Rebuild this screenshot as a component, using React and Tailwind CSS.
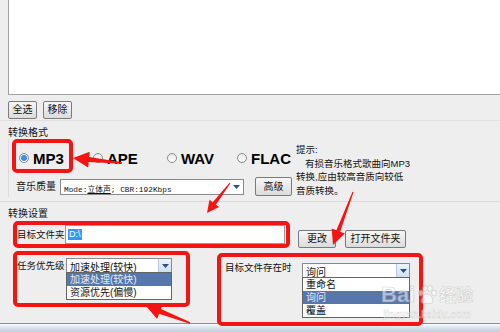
import React from "react";

const cjk = "font-['Liberation_Sans','Noto_Sans_CJK_SC',sans-serif]";

function Btn({ className = "", children }) {
  return (
    <div
      className={`flex shrink-0 items-center justify-center whitespace-nowrap rounded-[2px] border border-[#7a7a7a] bg-gradient-to-b from-[#f7f7f7] to-[#dcdcdc] text-[10px] leading-none text-[#111] ${className}`}
    >
      {children}
    </div>
  );
}

function Radio({ checked, label, className = "" }) {
  return (
    <div className={`flex items-center gap-[4px] ${className}`}>
      <div className="flex h-[10px] w-[10px] items-center justify-center rounded-full border border-[#8c8c8c] bg-gradient-to-b from-[#e9e9e9] to-white">
        {checked && <div className="h-[6px] w-[6px] rounded-full bg-[#3b8ee8]" />}
      </div>
      <span className="font-['Liberation_Sans',sans-serif] text-[15px] font-bold leading-none text-black">
        {label}
      </span>
    </div>
  );
}

function Caret() {
  return (
    <svg width="7" height="4" viewBox="0 0 7 4">
      <polygon points="0,0 7,0 3.5,4" fill="#2b4f8a" />
    </svg>
  );
}

function Select({ className = "", children, box, menu }) {
  return (
    <div className={`relative flex shrink-0 items-center border border-[#8a8a8a] bg-white ${className}`}>
      <div className="flex-1 overflow-hidden whitespace-nowrap pl-[3px]">{children}</div>
      <div
        className={`flex h-full w-[13px] items-center justify-center ${
          box ? "border-l border-[#b5c8df] bg-gradient-to-b from-[#eef4fb] to-[#cfdff0]" : ""
        }`}
      >
        <Caret />
      </div>
      {menu}
    </div>
  );
}

function DropList({ items, active }) {
  return (
    <div className="absolute -left-px top-full z-10 w-[calc(100%+2px)] border border-[#646464] bg-white">
      {items.map((t, i) => (
        <div
          key={t}
          className={`flex h-[13px] items-center whitespace-nowrap pl-[3px] text-[10px] leading-none ${
            i === active ? "bg-[#5676ac] text-[#e8ecf4]" : "text-[#111]"
          }`}
        >
          {t}
        </div>
      ))}
    </div>
  );
}

function arrow(x1, y1, x2, y2, head, hw, sw0, sw1) {
  const dx = x2 - x1;
  const dy = y2 - y1;
  const len = Math.hypot(dx, dy);
  const ux = dx / len;
  const uy = dy / len;
  const px = -uy;
  const py = ux;
  const bx = x2 - ux * head;
  const by = y2 - uy * head;
  const p = [
    [x1 + (px * sw0) / 2, y1 + (py * sw0) / 2],
    [bx + (px * sw1) / 2, by + (py * sw1) / 2],
    [bx + px * hw, by + py * hw],
    [x2, y2],
    [bx - px * hw, by - py * hw],
    [bx - (px * sw1) / 2, by - (py * sw1) / 2],
    [x1 - (px * sw0) / 2, y1 - (py * sw0) / 2],
  ];
  return p.map((q) => q.map((v) => v.toFixed(1)).join(",")).join(" ");
}

function Annotations() {
  return (
    <svg className="pointer-events-none absolute inset-0 z-20" width="500" height="332">
      <g fill="none" stroke="#f41414" strokeWidth="4">
        <rect x="14" y="141" width="57" height="30" rx="3" />
        <rect x="15" y="223" width="273" height="23" rx="3" />
        <rect x="15" y="253" width="173" height="52" rx="3" />
        <rect x="219" y="255" width="202" height="69" rx="3" />
      </g>
      <g fill="#f41414">
        <polygon points={arrow(122, 163, 73, 158, 16, 8, 1.5, 5)} />
        <polygon points={arrow(230, 183, 207, 213, 12, 6, 1, 4)} />
        <polygon points={arrow(353, 192, 333, 245, 15, 7, 1, 4)} />
        <polygon points={arrow(190, 323, 146, 306, 15, 8, 1.5, 5)} />
      </g>
    </svg>
  );
}

function Watermark() {
  return (
    <div className="pointer-events-none absolute left-[381px] top-[284px] z-30 flex flex-col items-center opacity-55">
      <div className="flex items-center">
        <span className="font-['Liberation_Sans',sans-serif] text-[22px] font-bold leading-none text-white [-webkit-text-stroke:0.6px_#b0b0b0]">
          Bai
        </span>
        <svg width="22" height="22" viewBox="0 0 22 22" className="mx-[1px]">
          <g fill="#fff" stroke="#b0b0b0" strokeWidth="0.8">
            <ellipse cx="5" cy="9" rx="2.4" ry="3" />
            <ellipse cx="9" cy="4.5" rx="2.4" ry="3" />
            <ellipse cx="14" cy="4.5" rx="2.4" ry="3" />
            <ellipse cx="18" cy="9" rx="2.4" ry="3" />
            <path d="M11 10 C7 10 5 15 5 17 C5 20 9 20 11 19 C13 20 17 20 17 17 C17 15 15 10 11 10 Z" />
          </g>
        </svg>
        <span className={`${cjk} text-[17px] font-bold leading-none text-white [-webkit-text-stroke:0.5px_#b0b0b0]`}>
          经验
        </span>
      </div>
      <span className="mt-[4px] font-['Liberation_Sans',sans-serif] text-[10px] font-bold leading-none text-white [-webkit-text-stroke:0.4px_#b8b8b8]">
        jingyan.baidu.com
      </span>
    </div>
  );
}

export default function App() {
  return (
    <div className={`relative flex h-[332px] w-[500px] flex-col overflow-hidden bg-[#eeeeee] text-[#111] ${cjk}`}>
      {/* file list */}
      <div className="ml-[8px] h-[95px] shrink-0 border-b border-l border-[#a3a3a3] bg-white" />

      <div className="ml-[8px] mt-[6px] flex gap-[6px]">
        <Btn className="h-[18px] w-[29px]">全选</Btn>
        <Btn className="h-[18px] w-[29px]">移除</Btn>
      </div>
      <div className="mt-[1px] h-px bg-[#e0e0e0]" />

      {/* 转换格式 */}
      <div className="ml-[8px] mt-[6px] h-[12px] text-[10px] leading-[12px]">转换格式</div>
      <div className="flex">
        <div className="ml-[8px] w-[296px] shrink-0 border-l border-[#dcdcdc]">
          <div className="flex h-[38px] items-center pl-[10px]">
            <Radio checked label="MP3" className="w-[74px]" />
            <Radio label="APE" className="w-[74px]" />
            <Radio label="WAV" className="w-[70px]" />
            <Radio label="FLAC" />
          </div>
          <div className="flex h-[19px] items-center pl-[7px]">
            <span className="w-[44px] shrink-0 whitespace-nowrap text-[10px] leading-none">音乐质量</span>
            <Select className="h-[16px] w-[184px]">
              <span className="font-['Liberation_Mono','Noto_Sans_CJK_SC',monospace] text-[7.8px] leading-none">
                Mode:<span className="underline">立体声</span>; CBR:192Kbps
              </span>
            </Select>
            <Btn className="ml-[11px] h-[19px] w-[37px]">高级</Btn>
          </div>
        </div>
        <div className="-ml-[8px] mt-[4px] whitespace-nowrap text-[9.5px] leading-[13.5px] text-[#111]">
          <div>提示:</div>
          <div className="pl-[9px]">有损音乐格式歌曲向MP3</div>
          <div>转换,应由较高音质向较低</div>
          <div>音质转换。</div>
        </div>
      </div>
      <div className="mt-[4px] h-px bg-[#dadada]" />

      {/* 转换设置 */}
      <div className="ml-[8px] mt-[6px] h-[12px] text-[10px] leading-[12px]">转换设置</div>
      <div className="mt-[5px] flex items-start pl-[17px]">
        <div className="flex h-[19px] w-[48px] shrink-0 items-center whitespace-nowrap text-[9.5px] leading-none">
          目标文件夹
        </div>
        <div className="flex h-[19px] w-[220px] shrink-0 items-center border border-[#9a9a9a] bg-white pl-[2px]">
          <span className="bg-[#3399ff] px-[1px] font-['Liberation_Sans',sans-serif] text-[9px] leading-[11px] text-white">
            D:\
          </span>
        </div>
        <Btn className="ml-[13px] mt-[5px] h-[18px] w-[38px]">更改</Btn>
        <Btn className="ml-[9px] mt-[5px] h-[18px] w-[61px]">打开文件夹</Btn>
      </div>

      <div className="mt-[10px] flex items-start pl-[17px]">
        <div className="flex items-center">
          <span className="w-[49px] shrink-0 whitespace-nowrap text-[9.5px] leading-none">任务优先级</span>
          <Select
            box
            className="h-[15px] w-[106px]"
            menu={<DropList items={["加速处理(较快)", "资源优先(偏慢)"]} active={0} />}
          >
            <span className="text-[10px] leading-none">加速处理(较快)</span>
          </Select>
        </div>
        <div className="ml-[53px] mt-[5px] flex items-start">
          <span className="w-[77px] shrink-0 whitespace-nowrap text-[9.5px] leading-none">目标文件存在时</span>
          <Select
            box
            className="h-[15px] w-[108px]"
            menu={<DropList items={["重命名", "询问", "覆盖"]} active={1} />}
          >
            <span className="text-[10px] leading-none">询问</span>
          </Select>
        </div>
      </div>

      {/* window bottom edge */}
      <div className="mt-auto h-[9px] shrink-0 border-t border-[#8f8f8f] bg-gradient-to-b from-[#fdfdfd] via-[#d5dfea] to-[#c3cfdc]" />

      <Annotations />
      <Watermark />
    </div>
  );
}
